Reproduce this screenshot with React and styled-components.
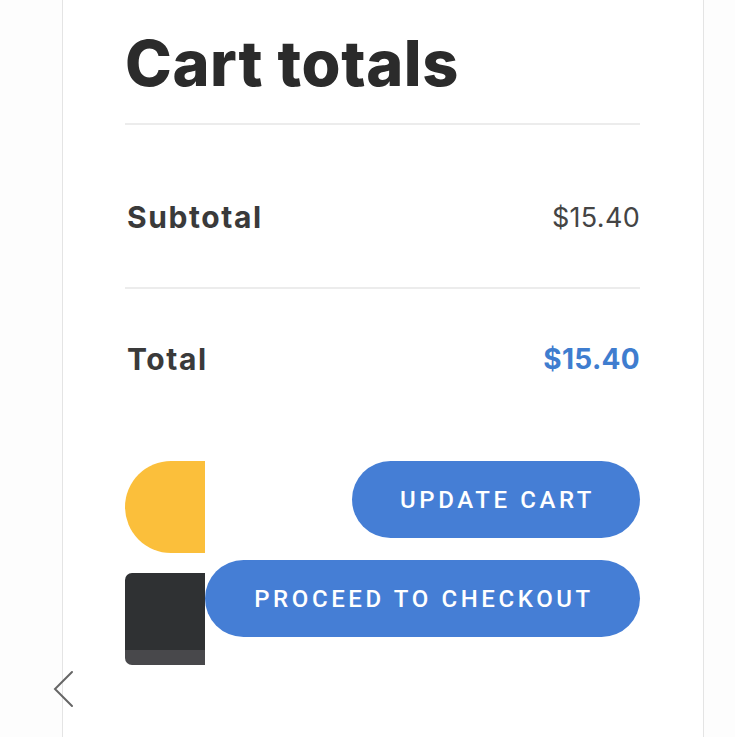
import React from "react";
import styled, { createGlobalStyle } from "styled-components";

const Global = createGlobalStyle`
  html, body { margin: 0; padding: 0; background: #fdfdfd; }
  body { font-family: Inter, "Open Sans", sans-serif; }
`;

const Page = styled.div`
  position: relative;
  width: 735px;
  height: 737px;
  overflow: hidden;
  display: flex;
`;

const Card = styled.div`
  margin-left: 62px;
  width: 642px;
  height: 737px;
  background: #ffffff;
  border-left: 1px solid #e4e4e4;
  border-right: 1px solid #e4e4e4;
  padding: 0 63px 0 62px;
  box-sizing: border-box;
  display: flex;
  flex-direction: column;
`;

const Heading = styled.h2`
  margin: 27px 0 0;
  font-family: Inter, sans-serif;
  font-weight: 800;
  font-size: 63px;
  line-height: 72px;
  letter-spacing: 0.6px;
  color: #2b2b2b;
  padding-bottom: 24px;
  border-bottom: 2px solid #ececec;
`;

const Row = styled.div`
  display: flex;
  justify-content: space-between;
  align-items: center;
  height: 34px;
  padding: ${(p) => p.$pad};
  border-bottom: ${(p) => (p.$divider ? "2px solid #ececec" : "none")};
`;

const Label = styled.span`
  font-family: Inter, sans-serif;
  font-weight: 700;
  font-size: 30px;
  letter-spacing: 1.6px;
  padding-left: 2px;
  color: #3a3a3a;
`;

const Amount = styled.span`
  font-family: Inter, sans-serif;
  font-weight: ${(p) => (p.$total ? 700 : 400)};
  font-size: ${(p) => (p.$total ? "28px" : "27px")};
  letter-spacing: 0.3px;
  color: ${(p) => (p.$total ? "#3f7dcf" : "#444444")};
`;

const Actions = styled.div`
  margin-top: 85px;
  display: flex;
`;

const Shapes = styled.div`
  width: 80px;
  flex: none;
  display: flex;
  flex-direction: column;
  gap: 20px;
`;

const YellowBlob = styled.div`
  height: 92px;
  background: #fbbf3b;
  border-radius: 46px 0 0 46px;
`;

const DarkBlock = styled.div`
  height: 92px;
  background: #2f3133;
  border-radius: 7px 0 0 7px;
  border-bottom: 15px solid #48484b;
  box-sizing: border-box;
`;

const Buttons = styled.div`
  flex: 1;
  display: flex;
  flex-direction: column;
  align-items: flex-end;
  gap: 22px;
`;

const PillButton = styled.button`
  height: 77px;
  width: ${(p) => p.$width};
  border: none;
  border-radius: 39px;
  background: #457ed5;
  color: #ffffff;
  font-family: Roboto, sans-serif;
  font-weight: 500;
  font-size: 24px;
  letter-spacing: 3.6px;
  padding: 0 0 0 3px;
  cursor: pointer;
`;

const Chevron = styled.div`
  position: absolute;
  left: 52px;
  top: 670px;
  width: 24px;
  height: 40px;
`;

export default function App() {
  return (
    <Page>
      <Global />
      <Card>
        <Heading>Cart totals</Heading>
        <Row $pad="75px 0 53px" $divider>
          <Label>Subtotal</Label>
          <Amount>$15.40</Amount>
        </Row>
        <Row $pad="53px 0 0">
          <Label>Total</Label>
          <Amount $total>$15.40</Amount>
        </Row>
        <Actions>
          <Shapes>
            <YellowBlob />
            <DarkBlock />
          </Shapes>
          <Buttons>
            <PillButton $width="288px">UPDATE CART</PillButton>
            <PillButton $width="435px">PROCEED TO CHECKOUT</PillButton>
          </Buttons>
        </Actions>
      </Card>
      <Chevron>
        <svg width="24" height="40" viewBox="0 0 24 40" fill="none">
          <path d="M20 2 L3 19 L20 36" stroke="#666" strokeWidth="2" strokeLinecap="round" strokeLinejoin="miter" />
        </svg>
      </Chevron>
    </Page>
  );
}
